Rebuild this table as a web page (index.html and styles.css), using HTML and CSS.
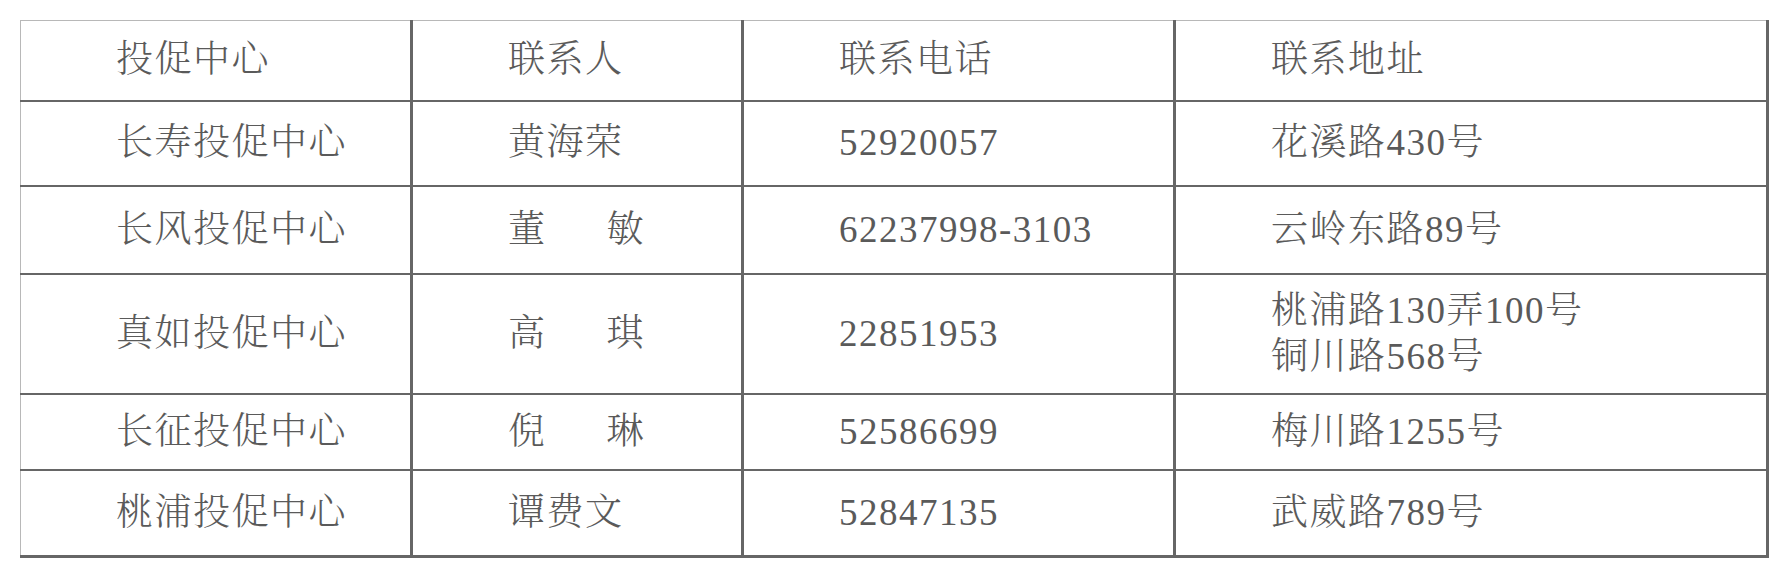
FILE: index.html
```html
<!DOCTYPE html>
<html lang="zh-CN">
<head>
<meta charset="utf-8">
<title>投促中心联系方式</title>
<link rel="stylesheet" href="styles.css">
</head>
<body>
<table class="contacts">
  <colgroup>
    <col class="c1"><col class="c2"><col class="c3"><col class="c4">
  </colgroup>
  <tr class="r-head">
    <td>投促中心</td><td>联系人</td><td>联系电话</td><td>联系地址</td>
  </tr>
  <tr class="r1">
    <td>长寿投促中心</td><td>黄海荣</td><td>52920057</td><td>花溪路430号</td>
  </tr>
  <tr class="r2">
    <td>长风投促中心</td><td>董&emsp;&nbsp;&nbsp;敏</td><td>62237998-3103</td><td>云岭东路89号</td>
  </tr>
  <tr class="r3">
    <td>真如投促中心</td><td>高&emsp;&nbsp;&nbsp;琪</td><td>22851953</td><td>桃浦路130弄100号<br>铜川路568号</td>
  </tr>
  <tr class="r4">
    <td>长征投促中心</td><td>倪&emsp;&nbsp;&nbsp;琳</td><td>52586699</td><td>梅川路1255号</td>
  </tr>
  <tr class="r5 last">
    <td>桃浦投促中心</td><td>谭费文</td><td>52847135</td><td>武威路789号</td>
  </tr>
</table>
</body>
</html>
```
FILE: styles.css
```css
html, body {
  margin: 0;
  padding: 0;
  background: #ffffff;
}

body {
  padding: 20px 0 0 20px;
}

.contacts {
  border-collapse: collapse;
  table-layout: fixed;
  width: 1747px;
  font-family: "Liberation Serif", "Noto Serif CJK SC", "Noto Sans CJK SC", serif;
  font-size: 37px;
  font-weight: 300;
  letter-spacing: 1.5px;
  color: #5a5a5a;
  border-top: 1px solid #b8b8b8;
  border-left: 1px solid #b8b8b8;
}

.c1 { width: 391px; }
.c2 { width: 331px; }
.c3 { width: 432px; }
.c4 { width: 593px; }

.contacts td {
  padding: 0 0 0 95px;
  vertical-align: middle;
  line-height: 46px;
  white-space: nowrap;
  border-right: 3px solid #666666;
  border-bottom: 2.5px solid #666666;
}

.contacts td:first-child {
  border-left: 1px solid #b8b8b8;
}

.contacts tr:first-child td {
  border-top: 1px solid #b8b8b8;
}

.contacts tr.last td {
  border-bottom: 3px solid #666666;
}

.r-head { height: 80px; }
.r1 { height: 85px; }
.r2 { height: 88px; }
.r3 { height: 120px; }
.r4 { height: 76px; }
.r5 { height: 87px; }
```
